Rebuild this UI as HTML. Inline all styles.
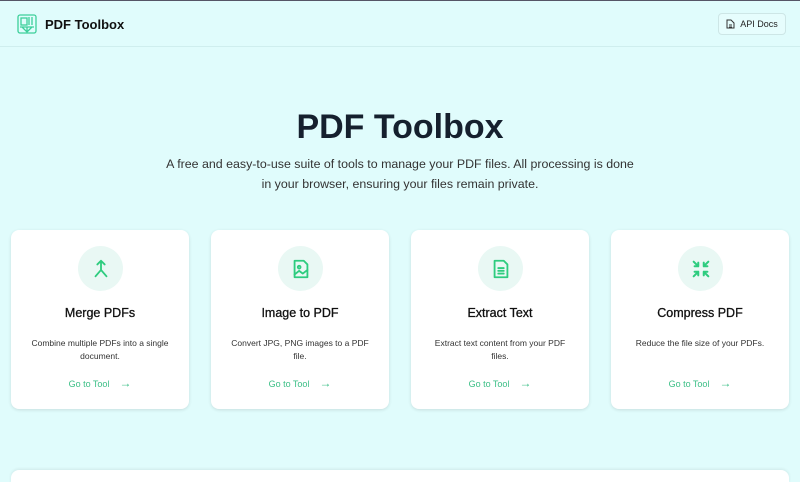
<!DOCTYPE html>
<html style="width:800px;height:482px;overflow:hidden"><head><style>
*{box-sizing:border-box;margin:0;padding:0}
body{width:800px;height:482px;overflow:hidden;background:#e0fcfc;font-family:"Liberation Sans",sans-serif;position:relative;border-top:1px solid #556;}
.hdr{position:absolute;left:0;top:0;width:800px;height:46px;border-bottom:1px solid #cfeeee;}
.logo{position:absolute;left:17px;top:13px}
.brand{position:absolute;left:45px;top:16px;font-weight:bold;font-size:13px;color:#111}
.api{position:absolute;left:718px;top:12px;width:68px;height:22px;border:1px solid #cde6e6;border-radius:4px;font-size:9px;color:#222;display:flex;align-items:center;justify-content:center;gap:5px;background:#e6fdfd}
h1{position:absolute;top:107px;width:800px;text-align:center;font-size:34px;color:#15202e;font-weight:bold}
.sub{position:absolute;top:153px;left:160px;width:480px;text-align:center;font-size:12.4px;line-height:20px;color:#333}
.card{position:absolute;top:229px;width:178px;height:179px;background:#fff;border-radius:8px;box-shadow:0 1px 3px rgba(0,0,0,.12);text-align:center}
.ic{position:absolute;left:67px;top:16px;width:45px;height:45px;border-radius:50%;background:#e9f8f4;display:flex;align-items:center;justify-content:center}
.t{position:absolute;top:76px;width:100%;font-size:12.5px;color:#111;-webkit-text-stroke:0.3px #111}
.d{position:absolute;top:107px;left:16px;right:16px;font-size:8.5px;line-height:13px;color:#333}
.g{position:absolute;top:146px;width:100%;font-size:9px;color:#3bbf86}
.g span{font-size:12px}
.bottom{position:absolute;left:11px;top:469px;width:778px;height:13px;background:#fff;border-radius:8px 8px 0 0;box-shadow:0 -1px 3px rgba(0,0,0,.08)}
</style></head><body>
<div class="hdr">
<svg class="logo" width="20" height="20" viewBox="0 0 20 20" fill="none" stroke="#3ccf9a" stroke-width="1.3"><rect x="1" y="1" width="18" height="18" rx="2"/><rect x="4" y="4" width="6" height="7"/><path d="M12 3v8M15 3v8M3 13h14M5 13l5 5 5-5M10 13v5"/></svg>
<div class="brand">PDF Toolbox</div>
<div class="api"><svg width="9" height="10" viewBox="0 0 9 10" fill="none" stroke="#333" stroke-width="1"><path d="M1 1h4l3 3v5H1z M3 6h3M3 8h3"/></svg>API Docs</div>
</div>
<h1>PDF Toolbox</h1>
<div class="sub">A free and easy-to-use suite of tools to manage your PDF files. All processing is done in your browser, ensuring your files remain private.</div>

<div class="card" style="left:11px"><div class="ic"><svg width="22" height="22" viewBox="0 0 24 24" fill="none" stroke="#2ecc7f" stroke-width="2" stroke-linecap="round" stroke-linejoin="round"><path d="M12 3v10l-6 7M12 13l6 7M8 7l4-4 4 4"/></svg></div><div class="t">Merge PDFs</div><div class="d">Combine multiple PDFs into a single document.</div><div class="g">Go to Tool &nbsp;&nbsp;&nbsp;<span>→</span></div></div>

<div class="card" style="left:211px"><div class="ic"><svg width="22" height="22" viewBox="0 0 24 24" fill="none" stroke="#2ecc7f" stroke-width="2" stroke-linecap="round" stroke-linejoin="round"><path d="M5 3h10l4 4v14H5z"/><circle cx="10" cy="10" r="1.5"/><path d="M5 18l5-4 4 3 5-4"/></svg></div><div class="t">Image to PDF</div><div class="d">Convert JPG, PNG images to a PDF file.</div><div class="g">Go to Tool &nbsp;&nbsp;&nbsp;<span>→</span></div></div>

<div class="card" style="left:411px"><div class="ic"><svg width="22" height="22" viewBox="0 0 24 24" fill="none" stroke="#2ecc7f" stroke-width="2" stroke-linecap="round" stroke-linejoin="round"><path d="M5 3h10l4 4v14H5z M9 11h6M9 14h6M9 17h6"/></svg></div><div class="t">Extract Text</div><div class="d">Extract text content from your PDF files.</div><div class="g">Go to Tool &nbsp;&nbsp;&nbsp;<span>→</span></div></div>

<div class="card" style="left:611px"><div class="ic"><svg width="22" height="22" viewBox="0 0 24 24" fill="none" stroke="#2ecc7f" stroke-width="2.2" stroke-linecap="round" stroke-linejoin="round"><path d="M4 4l5 5M9 5v4H5M20 4l-5 5M15 5v4h4M4 20l5-5M9 19v-4H5M20 20l-5-5M15 19v-4h4"/></svg></div><div class="t">Compress PDF</div><div class="d">Reduce the file size of your PDFs.</div><div class="g">Go to Tool &nbsp;&nbsp;&nbsp;<span>→</span></div></div>

<div class="bottom"></div>
</body></html>
